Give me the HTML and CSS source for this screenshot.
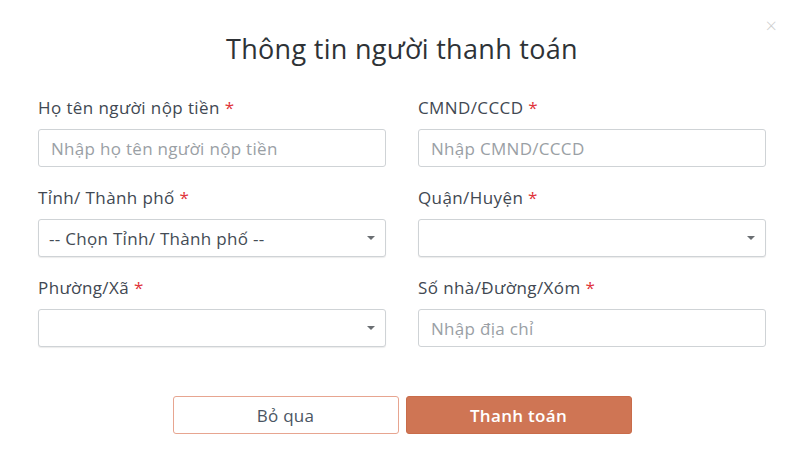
FILE: index.html
```html
<!DOCTYPE html>
<html>
<head>
<meta charset="utf-8">
<title>Thông tin người thanh toán</title>
<link rel="stylesheet" href="styles.css">
</head>
<body>
<div class="modal">
  <span class="close">&times;</span>
  <h1 class="title">Thông tin người thanh toán</h1>
  <div class="grid">
    <div class="field">
      <label>Họ tên người nộp tiền <span class="req">*</span></label>
      <input type="text" placeholder="Nhập họ tên người nộp tiền">
    </div>
    <div class="field">
      <label>CMND/CCCD <span class="req">*</span></label>
      <input type="text" placeholder="Nhập CMND/CCCD">
    </div>
    <div class="field">
      <label>Tỉnh/ Thành phố <span class="req">*</span></label>
      <div class="select"><span>-- Chọn Tỉnh/ Thành phố --</span><i class="caret"></i></div>
    </div>
    <div class="field">
      <label>Quận/Huyện <span class="req">*</span></label>
      <div class="select"><span></span><i class="caret"></i></div>
    </div>
    <div class="field">
      <label>Phường/Xã <span class="req">*</span></label>
      <div class="select"><span></span><i class="caret"></i></div>
    </div>
    <div class="field">
      <label>Số nhà/Đường/Xóm <span class="req">*</span></label>
      <input type="text" placeholder="Nhập địa chỉ">
    </div>
  </div>
  <div class="actions">
    <button class="btn btnCancel">Bỏ qua</button>
    <button class="btn btnPay">Thanh toán</button>
  </div>
</div>
</body>
</html>
```
FILE: styles.css
```css
html, body { margin: 0; padding: 0; background: #fff; }
body { font-family: "Open Sans", "Noto Sans", sans-serif; color: #3f4650; }
.modal { width: 800px; height: 468px; box-sizing: border-box; padding: 30px 34px 0 38px; position: relative; }
.close { position: absolute; right: 23px; top: 16px; font-size: 20px; color: #cfcfcf; font-weight: 300; line-height: 1; }
.title { margin: 0 0 29px; text-align: center; font-size: 27px; letter-spacing: 0.3px; font-weight: 400; color: #2e3236; line-height: 38px; }
.grid { display: grid; grid-template-columns: 348px 348px; column-gap: 32px; row-gap: 20px; }
.field label { display: block; font-size: 17px; letter-spacing: 0.4px; line-height: 22px; margin-bottom: 10px; color: #414852; }
.req { color: #e0343a; }
.field input, .select { box-sizing: border-box; width: 348px; height: 38px; border: 1px solid #cfd3d6; border-radius: 3px; font-family: inherit; font-size: 17px; letter-spacing: 0.3px; padding: 0 12px; color: #444; background: #fff; outline: none; }
.field input::placeholder { color: #9aa0a5; }
.select { display: flex; align-items: center; justify-content: space-between; color: #444c55; box-shadow: 0 1px 1px rgba(0,0,0,0.08); padding-left: 10px; }
.caret { width: 0; height: 0; border-left: 4px solid transparent; border-right: 4px solid transparent; border-top: 4px solid #6a6e72; margin-right: -2px; }
.actions { display: flex; justify-content: center; gap: 7px; margin-top: 49px; }
.btn { width: 226px; height: 38px; border-radius: 3px; font-family: inherit; font-size: 17px; letter-spacing: 0.3px; cursor: pointer; }
.btnCancel { background: #fff; border: 1px solid #e7a590; color: #4a5563; }
.btnPay { background: #cf7554; border: 1px solid #c96c4a; color: #fff; font-weight: 600; }
```
